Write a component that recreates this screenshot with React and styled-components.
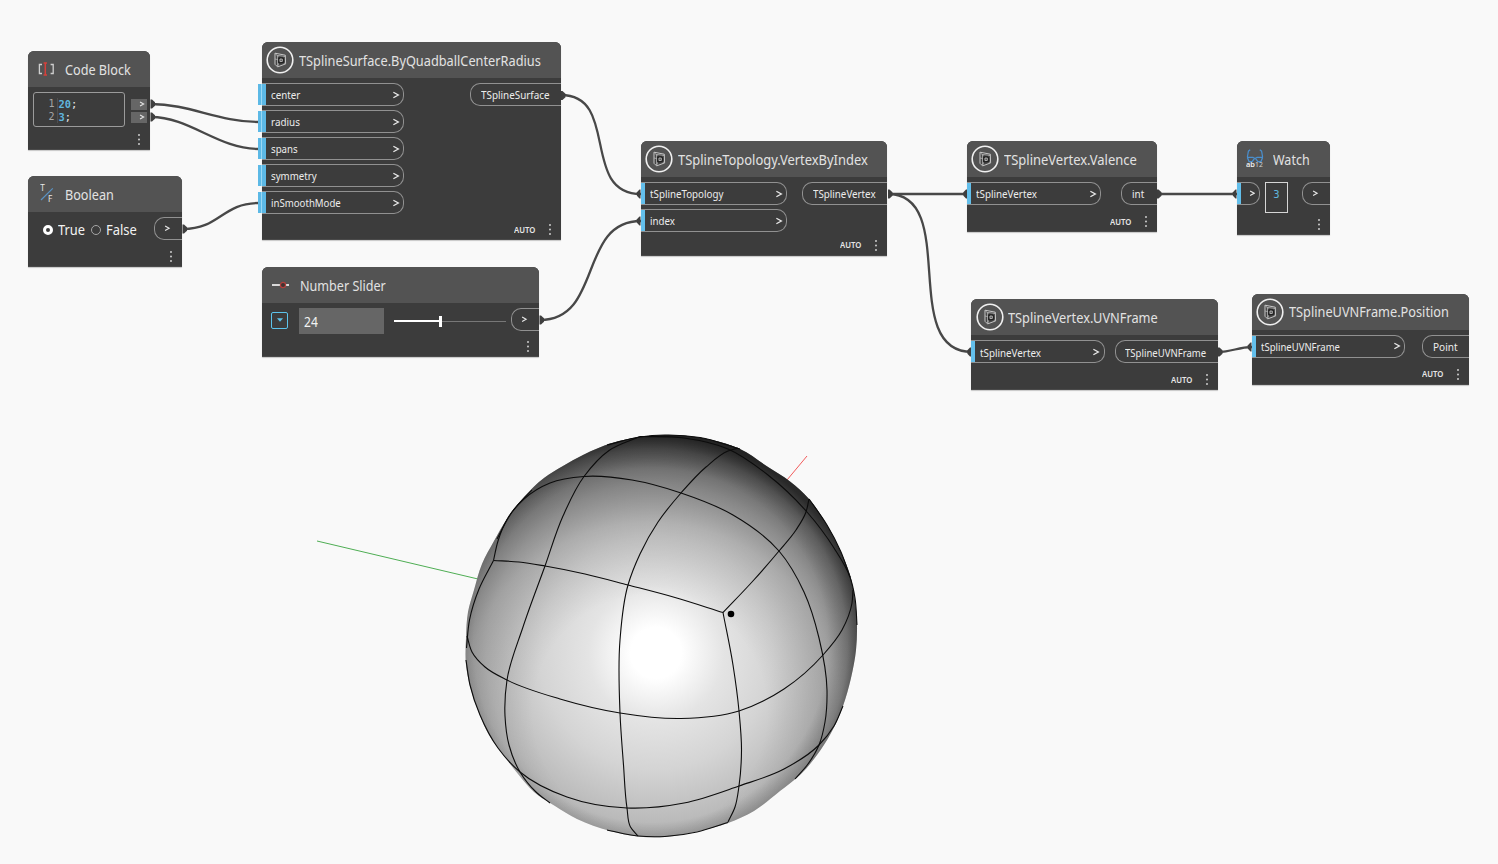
import React, { useLayoutEffect, useRef, useState } from "react";
import styled, { createGlobalStyle, css } from "styled-components";

const GlobalStyle = createGlobalStyle`
  body { margin: 0; background: #f9f9f9; }
  * { box-sizing: border-box; }
`;

const Canvas = styled.main`
  position: relative;
  width: 1498px;
  height: 864px;
  overflow: hidden;
  background: #f9f9f9;
  font-family: "Noto Sans", "Open Sans", sans-serif;
  color: #e4e4e4;
`;

const Scene = styled.svg`
  position: absolute;
  inset: 0;
  display: block;
`;

const NodeCard = styled.section`
  position: absolute;
  left: ${(p) => p.$x}px;
  top: ${(p) => p.$y}px;
  width: ${(p) => p.$w}px;
  height: ${(p) => p.$h}px;
  display: flex;
  flex-direction: column;
  background: #3c3c3c;
  border-radius: 6px 6px 0 0;
  box-shadow: inset 0 -1px 0 #4a4a4a, 0 1px 1px rgba(0, 0, 0, 0.2);
`;

const Header = styled.header`
  height: 36px;
  flex: none;
  display: flex;
  align-items: center;
  padding-left: ${(p) => p.$pad ?? 5}px;
  gap: ${(p) => p.$gap ?? 5}px;
  background: #535353;
  border-radius: 6px 6px 0 0;
`;

const Body = styled.div`
  flex: 1;
  display: flex;
  justify-content: space-between;
  align-items: flex-start;
  padding-top: 5px;
`;

const Footer = styled.footer`
  height: 21px;
  flex: none;
  display: flex;
  align-items: center;
  justify-content: flex-end;
  gap: 13px;
  padding-right: 9px;
`;

const DotsSvg = styled.svg`
  display: block;
`;

const Dots = () => (
  <DotsSvg width="4" height="13" viewBox="0 0 4 13" fill="#c4c4c4">
    <circle cx="2" cy="2" r="1.05" />
    <circle cx="2" cy="6.5" r="1.05" />
    <circle cx="2" cy="11" r="1.05" />
  </DotsSvg>
);

const PortColumn = styled.div`
  display: flex;
  flex-direction: column;
  gap: 4px;
`;

const InPort = styled.div`
  width: ${(p) => p.$w}px;
  height: 23px;
  display: flex;
  align-items: center;
  justify-content: space-between;
  padding: 0 3.5px 0 4px;
  border: 1px solid #919191;
  border-left: 0;
  border-radius: 0 10px 10px 0;

  &::before {
    content: "";
    align-self: stretch;
    flex: none;
    margin: 0 5px 0 ${(p) => (p.$wide ? -8 : -4)}px;
    width: ${(p) => (p.$wide ? 8 : 4)}px;
    background: ${(p) =>
      p.$wide
        ? "linear-gradient(90deg, #5cb9e6 3.5px, #9bd8f5 3.5px, #9bd8f5 4.5px, #5cb9e6 4.5px)"
        : "#63bfeb"};
  }
`;

const PortName = styled.span`
  flex: 1;
  display: flex;
`;

const OutPort = styled.div`
  width: ${(p) => p.$w}px;
  height: 23px;
  display: flex;
  align-items: center;
  padding-left: ${(p) => p.$pad ?? 10}px;
  border: 1px solid #919191;
  border-right: 0;
  border-radius: 10px 0 0 10px;
`;

const TextSlot = styled.span`
  display: flex;
  flex: none;
  padding-top: ${(p) => (p.$kind === "title" ? 2 : p.$kind === "port" ? 0.5 : 1)}px;
`;

const Text = styled.span`
  flex: none;
  white-space: pre;
  line-height: 1;
  transform-origin: 0 50%;
  ${(p) =>
    p.$kind === "title" &&
    css`
      font-size: 14.2px;
      color: #e2e2e2;
    `}
  ${(p) =>
    p.$kind === "port" &&
    css`
      font-size: 11.1px;
      color: #ececec;
    `}
  ${(p) =>
    p.$kind === "auto" &&
    css`
      font-size: 8.5px;
      font-weight: 600;
      color: #e6e6e6;
    `}
  ${(p) =>
    p.$kind === "option" &&
    css`
      font-size: 13.8px;
      color: #f2f2f2;
    `}
`;

// A label condensed so that it fills a given width.
function Label({ kind, width, children }) {
  const ref = useRef(null);
  const [scale, setScale] = useState(1);
  useLayoutEffect(() => {
    setScale(width / ref.current.offsetWidth);
  }, [width]);
  return (
    <TextSlot $kind={kind} style={{ width }}>
      <Text ref={ref} $kind={kind} style={{ transform: `scaleX(${scale})` }}>
        {children}
      </Text>
    </TextSlot>
  );
}

const ChevronSvg = styled.svg`
  flex: none;
  display: block;
`;

const Chevron = ({ size = 8 }) => (
  <ChevronSvg width={size} height={size} viewBox="0 0 7 7" fill="none" stroke="#e8e8e8" strokeWidth="1.2">
    <path d="M1.2 1.1 5.5 3.5 1.2 5.9" />
  </ChevronSvg>
);

const SplineIcon = () => (
  <svg width="28" height="28" viewBox="0 0 28 28" fill="none">
    <circle cx="14" cy="14" r="12.8" stroke="#f0f0f0" strokeWidth="1.6" />
    <g strokeLinejoin="round">
      <path d="M9 7.2 19.3 9.2 19.6 17.9 11.6 20.9 9 18.3Z" fill="#454545" stroke="#c6c6c6" strokeWidth="1" />
      <path d="M11.4 9.2 11.6 20.4M9.2 7.4 12.8 11.4M19.2 9.4 17.3 11.6M19.4 17.8 17.3 16.6M11.6 20.6 12.8 16.8M9 13 12.6 13.8M11.3 9.4 19.2 10.4" stroke="#b5b5b5" strokeWidth="0.8" />
      <path d="M12.8 11.8 17.3 12V16.4L12.8 16.8Z" stroke="#202020" strokeWidth="1.3" />
      <path d="M14 13 16.3 13.1V15.4L14 15.6Z" stroke="#c6c6c6" strokeWidth="0.8" />
    </g>
  </svg>
);

const CodeIcon = () => (
  <svg width="17" height="14" viewBox="0 0 17 14" fill="none">
    <path d="M4 2.5H1.4V11.5H4M12.6 2.5H15.2V11.5H12.6" stroke="#cfcfcf" strokeWidth="1.3" />
    <path d="M7.3 1.5V12.5M5.6 1H9M5.6 13H9" stroke="#d6403b" strokeWidth="1.5" />
  </svg>
);

const IconLetter = styled.text`
  font-family: "Noto Sans", sans-serif;
  font-size: ${(p) => p.$size}px;
  fill: ${(p) => p.$fill};
`;

const BooleanIcon = () => (
  <svg width="14" height="20" viewBox="0 -1 14 20" fill="none">
    <path d="M1 15 12.8 3.4" stroke="#5a93c4" strokeWidth="1.2" />
    <IconLetter $size={8.2} $fill="#e8e8e8" x="0.2" y="6.4">T</IconLetter>
    <IconLetter $size={8.2} $fill="#e8e8e8" x="8" y="16.6">F</IconLetter>
  </svg>
);

const SliderIcon = () => (
  <svg width="17" height="8" viewBox="0 0 17 8" fill="none">
    <path d="M0 4H17" stroke="#f2f2f2" strokeWidth="1.7" />
    <circle cx="11" cy="4" r="2.6" fill="#3e3434" stroke="#b4403d" strokeWidth="1.2" />
  </svg>
);

const WatchIcon = () => (
  <svg width="18" height="20" viewBox="0 0 18 20" fill="none">
    <path
      d="M4.2 .8 2.4 2.2 1.4 8M13.8 .8 15.6 2.2 16.6 8"
      stroke="#4a8fce"
      strokeWidth="1.2"
    />
    <path
      d="M1 8.4H6.9L9 9.6 11.1 8.4H17M1.4 8.6 3 12.6H6.2L8.3 9.6M16.6 8.6 15 12.6H11.8L9.7 9.6"
      stroke="#4a8fce"
      strokeWidth="1.3"
    />
    <IconLetter $size={7.4} $fill="#ececec" x="0" y="18.4" fontWeight="600">ab</IconLetter>
    <IconLetter $size={6.8} $fill="#d4d4d4" x="9" y="18.4">12</IconLetter>
  </svg>
);

function SplineNode({ x, y, w, h, title, titleWidth, inputs, inWidth, output, outWidth, outText, wide }) {
  return (
    <NodeCard $x={x} $y={y} $w={w} $h={h}>
      <Header $pad={4.3} $gap={4.5}>
        <SplineIcon />
        <Label kind="title" width={titleWidth}>{title}</Label>
      </Header>
      <Body>
        <PortColumn>
          {inputs.map(([name, width]) => (
            <InPort key={name} $w={inWidth} $wide={wide}>
              <PortName>
                <Label kind="port" width={width}>{name}</Label>
              </PortName>
              <Chevron />
            </InPort>
          ))}
        </PortColumn>
        <OutPort $w={outWidth} $pad={9.5}>
          <Label kind="port" width={outText}>{output}</Label>
        </OutPort>
      </Body>
      <Footer>
        <Label kind="auto" width={21}>AUTO</Label>
        <Dots />
      </Footer>
    </NodeCard>
  );
}

const CodeEditor = styled.div`
  width: 92px;
  height: 35px;
  margin-left: 4.5px;
  padding: 5px 0 0 14px;
  border: 1px solid #9b9b9b;
  border-radius: 3px;
`;

const CodeLine = styled.div`
  height: 12.5px;
  display: flex;
  align-items: center;
  font-family: "DejaVu Sans Mono", monospace;
  font-size: 10.4px;
  line-height: 12.5px;
  color: #e8e8e8;
`;

const LineNumber = styled.span`
  width: 10px;
  height: 100%;
  padding-left: 1px;
  border-right: 1px solid #4f4f4f;
  color: #a7a7a7;
  font-size: 10px;
`;

const Digits = styled.b`
  margin-left: 1px;
  color: #5fb6de;
`;

const CodePorts = styled.div`
  display: flex;
  flex-direction: column;
  gap: 2px;
  padding: 6.5px 3px 0 0;
`;

const CodePort = styled.div`
  width: 16px;
  height: 11px;
  display: flex;
  align-items: center;
  justify-content: center;
  padding-left: 5px;
  background: #666;
`;

const RadioGroup = styled.div`
  display: flex;
  align-items: center;
  gap: 4.5px;
  height: 24px;
  padding: 1px 0 0 15px;
`;

const Radio = styled.i`
  width: 10px;
  height: 10px;
  border-radius: 50%;
  border: ${(p) => (p.$on ? "3px solid #fff" : "1.4px solid #a6a6a6")};
  margin-left: ${(p) => (p.$on ? 0 : 2)}px;
`;

const SliderRow = styled.div`
  display: flex;
  align-items: center;
  padding-left: 9px;
`;

const DropBox = styled.div`
  width: 17px;
  height: 17px;
  display: grid;
  place-items: center;
  border: 1.5px solid #5cc4ec;
  border-radius: 2px;
  margin: 0 11px 2px 0;
`;

const ValueBox = styled.div`
  width: 85px;
  height: 26px;
  display: flex;
  align-items: center;
  padding-left: 5px;
  background: #666;
  margin-right: 10px;
`;

const Track = styled.div`
  width: 112px;
  height: 11px;
  display: flex;
  align-items: center;
`;

const Filled = styled.i`
  width: 45px;
  height: 2px;
  background: #fff;
`;

const Thumb = styled.i`
  width: 3px;
  height: 11px;
  background: #fff;
`;

const Rest = styled.i`
  flex: 1;
  height: 1px;
  background: #777;
`;

const WatchValue = styled.div`
  width: 23px;
  height: 31px;
  display: grid;
  place-items: start center;
  padding: 6px 0 0 1px;
  border: 1px solid #d6d6d6;
  color: #5fb6de;
  font: 10.5px/10px "DejaVu Sans Mono", monospace;
`;

const WatchInputs = styled.div`
  display: flex;
  align-items: flex-start;
  gap: 5px;
`;

// Smooth curve through a list of points: the tangent at each point is parallel
// to the chord of its neighbours, and each handle is a third of its segment.
function through(points, closed = false) {
  const n = points.length;
  const at = (i) => (closed ? points[(i + n) % n] : points[Math.max(0, Math.min(n - 1, i))]);
  const tangent = (i) => {
    const a = at(i - 1);
    const b = at(i);
    const c = at(i + 1);
    // The nearer neighbour has the greater say in the direction.
    const l0 = Math.hypot(b[0] - a[0], b[1] - a[1]);
    const l1 = Math.hypot(c[0] - b[0], c[1] - b[1]);
    const w0 = l0 ? l1 / l0 : 0;
    const w1 = l1 ? l0 / l1 : 0;
    const edge = !l0 || !l1;
    const vx = edge ? c[0] - a[0] : (b[0] - a[0]) * w0 + (c[0] - b[0]) * w1;
    const vy = edge ? c[1] - a[1] : (b[1] - a[1]) * w0 + (c[1] - b[1]) * w1;
    const len = Math.hypot(vx, vy) || 1;
    return [vx / len, vy / len];
  };
  let d = `M${points[0].join(" ")}`;
  for (let i = 0; i < (closed ? n : n - 1); i++) {
    const b = at(i);
    const c = at(i + 1);
    const h = Math.hypot(c[0] - b[0], c[1] - b[1]) / 3;
    const t0 = tangent(i);
    const t1 = tangent(i + 1);
    d += `C${b[0] + t0[0] * h} ${b[1] + t0[1] * h} ${c[0] - t1[0] * h} ${c[1] - t1[1] * h} ${c[0]} ${c[1]}`;
  }
  return d;
}

const outline = [
  [665, 435], [640, 437], [612, 443], [583, 455], [563, 466], [544, 478], [524, 497], [507, 519],
  [494, 541], [482, 564], [474, 590], [468, 612], [466, 638], [466, 665], [470, 686], [479, 713],
  [489, 735], [504, 756], [518, 774], [534, 792], [555, 806], [577, 819], [610, 831], [638, 836.5],
  [665, 837], [695, 832], [728, 823], [754, 811], [780, 791], [801, 774], [817, 755], [831, 733],
  [843, 706], [851, 678], [856, 650], [857, 625], [855, 600], [850, 575], [840, 550], [827, 525],
  [809, 499], [790, 481.5], [768, 467], [740, 449], [712, 440], [688, 436],
];

const meshLines = [
  [[466.5, 648], [469.5, 620], [479, 589], [493.5, 560.5]],
  [[493.5, 560.5], [498, 541], [507, 519.5], [524, 499], [550, 483], [584, 476.5], [632, 480], [681, 493], [733, 515], [779, 551], [804, 592], [819, 638], [827, 690], [825, 722], [819, 745], [808, 764], [795, 779]],
  [[640, 436.5], [609, 450.5], [584, 476.5], [563, 516], [545, 566], [523, 627], [507, 680], [505, 716], [509, 745], [520, 772], [536, 792], [550, 803]],
  [[738, 448], [728, 451], [706, 467], [681, 493], [658, 522], [640, 554], [628, 585], [620, 640], [620, 713], [623.5, 765], [627, 808], [630.5, 827], [638, 836]],
  [[493.5, 560.5], [519, 562], [545, 566], [585, 574], [628, 585], [675, 597.5], [723, 612.5]],
  [[723, 612.5], [752, 582], [779, 551], [796, 530], [806, 512], [809, 499]],
  [[723, 612.5], [733, 665], [739, 711], [741.5, 750], [739, 786], [735, 807], [728, 822]],
  [[467, 636], [472, 652], [485, 667], [507, 680], [560, 699], [620, 713], [681, 718.5], [739, 711], [784, 689], [823, 655], [842, 630], [852, 603], [853, 590]],
  [[466, 660], [470, 685], [480, 715], [498, 748], [520, 772], [567, 797], [627, 808], [684, 803], [739, 786], [784, 769], [819, 745], [834, 726], [843, 706]],
  [[640, 436.5], [684, 438], [728, 449], [768, 475], [807, 512], [834, 548], [850, 577], [855, 598], [857, 625]],
  [[607, 445], [640, 437], [665, 435], [700, 437.5], [740, 449]],
  [[532, 490], [512, 512], [497, 539]],
  [[607, 830], [638, 836], [665, 836.5], [697, 832], [728, 822.5]],
  [[809, 499], [827, 525], [841, 552], [850, 577]],
];

const wires = [
  "M151 104C190 104 218 122 259 122",
  "M151 117C190 117 218 149 259 149",
  "M183 229C220 229 222 203 259 203",
  "M561 95C620 95 580 194 641 194",
  "M540 320C603 320 578 221 641 221",
  "M888 194H968",
  "M888 194C960 194 898 352 972 352",
  "M1157 194H1237",
  "M1218 352C1232 352 1238 347 1252 347",
];

const outNubs = [[150.5, 104], [150.5, 117], [182.5, 229], [561, 95.5], [539.5, 320], [888, 194], [1157, 194], [1218, 352]];
const inNubs = [[640.5, 194], [640.5, 221], [967, 194], [1236.5, 194], [971, 352], [1251.5, 347]];

function Viewport() {
  const ball = through(outline, true);
  return (
    <Scene width="1498" height="864" viewBox="0 0 1498 864" fill="none">
      <defs>
        <radialGradient id="light" gradientUnits="userSpaceOnUse" cx="656" cy="653" r="212">
          <stop offset="0" stopColor="#ffffff" />
          <stop offset="0.12" stopColor="#ffffff" />
          <stop offset="0.32" stopColor="#e4e4e4" />
          <stop offset="0.55" stopColor="#d4d4d4" />
          <stop offset="0.8" stopColor="#bababa" />
          <stop offset="1" stopColor="#949494" />
        </radialGradient>
        <radialGradient id="shade" gradientUnits="userSpaceOnUse" cx="650" cy="712" r="292">
          <stop offset="0.4" stopColor="#000" stopOpacity="0" />
          <stop offset="0.65" stopColor="#000" stopOpacity="0.14" />
          <stop offset="0.83" stopColor="#000" stopOpacity="0.34" />
          <stop offset="1" stopColor="#000" stopOpacity="0.68" />
        </radialGradient>
        <radialGradient id="rim" gradientUnits="userSpaceOnUse" cx="651" cy="645" r="211">
          <stop offset="0.84" stopColor="#000" stopOpacity="0" />
          <stop offset="0.93" stopColor="#000" stopOpacity="0.15" />
          <stop offset="1" stopColor="#000" stopOpacity="0.45" />
        </radialGradient>
      </defs>
      <path d="M317 541 478 579" stroke="#4fae54" />
      <path d="M787 480 807 456" stroke="#f25b5b" />
      <path d={ball} fill="url(#light)" />
      <path d={ball} fill="url(#shade)" />
      <path d={ball} fill="url(#rim)" />
      <g stroke="#0c0c0c" strokeWidth="1.1">
        {meshLines.map((points, i) => (
          <path key={i} d={through(points)} />
        ))}
      </g>
      <circle cx="731" cy="614" r="3.3" fill="#000" />
      <g stroke="#484848" strokeWidth="2.3">
        {wires.map((d) => (
          <path key={d} d={d} />
        ))}
      </g>
      <g fill="#3f3f3f">
        {outNubs.map(([x, y]) => (
          <path key={`${x}-${y}`} d={`M${x} ${y - 4.5}h1.5l3 2.8v3.4l-3 2.8h-1.5z`} />
        ))}
        {inNubs.map(([x, y]) => (
          <path key={`${x}-${y}`} d={`M${x} ${y - 4.5}h-1l-2.6 2.8v3.4l2.6 2.8h1z`} />
        ))}
      </g>
    </Scene>
  );
}

export default function App() {
  return (
    <Canvas>
      <GlobalStyle />
      <Viewport />

      <NodeCard $x={28} $y={51} $w={122.4} $h={99}>
        <Header $pad={9.5} $gap={10}>
          <CodeIcon />
          <Label kind="title" width={66}>Code Block</Label>
        </Header>
        <Body>
          <CodeEditor>
            <CodeLine><LineNumber>1</LineNumber><Digits>20</Digits>;</CodeLine>
            <CodeLine><LineNumber>2</LineNumber><Digits>3</Digits>;</CodeLine>
          </CodeEditor>
          <CodePorts>
            <CodePort><Chevron size={6} /></CodePort>
            <CodePort><Chevron size={6} /></CodePort>
          </CodePorts>
        </Body>
        <Footer><Dots /></Footer>
      </NodeCard>

      <NodeCard $x={28} $y={176} $w={154.4} $h={91}>
        <Header $pad={12} $gap={11}>
          <BooleanIcon />
          <Label kind="title" width={49}>Boolean</Label>
        </Header>
        <Body>
          <RadioGroup>
            <Radio $on />
            <Label kind="option" width={27}>True</Label>
            <Radio />
            <Label kind="option" width={31}>False</Label>
          </RadioGroup>
          <OutPort $w={28.5} $pad={9.5}><Chevron size={6.5} /></OutPort>
        </Body>
        <Footer><Dots /></Footer>
      </NodeCard>

      <SplineNode
        x={262} y={42} w={299} h={198.4} wide
        title="TSplineSurface.ByQuadballCenterRadius" titleWidth={242}
        inputs={[["center", 29], ["radius", 28.5], ["spans", 27], ["symmetry", 45.5], ["inSmoothMode", 69.5]]}
        inWidth={142} output="TSplineSurface" outWidth={91} outText={68.5}
      />

      <NodeCard $x={262} $y={267} $w={277.4} $h={90.4}>
        <Header $pad={10} $gap={10.5}>
          <SliderIcon />
          <Label kind="title" width={86}>Number Slider</Label>
        </Header>
        <Body>
          <SliderRow>
            <DropBox>
              <svg width="6" height="4" viewBox="0 0 6 4"><path d="M0 .3H6L3 3.7Z" fill="#5cc4ec" /></svg>
            </DropBox>
            <ValueBox><Label kind="option" width={14}>24</Label></ValueBox>
            <Track><Filled /><Thumb /><Rest /></Track>
          </SliderRow>
          <OutPort $w={28.5} $pad={9.5}><Chevron size={6.5} /></OutPort>
        </Body>
        <Footer><Dots /></Footer>
      </NodeCard>

      <SplineNode
        x={641} y={141} w={246.4} h={114.6}
        title="TSplineTopology.VertexByIndex" titleWidth={189.5}
        inputs={[["tSplineTopology", 73], ["index", 24.5]]}
        inWidth={146} output="TSplineVertex" outWidth={85} outText={62.5}
      />
      <SplineNode
        x={967} y={141} w={190} h={91}
        title="TSplineVertex.Valence" titleWidth={132.5}
        inputs={[["tSplineVertex", 61]]}
        inWidth={134} output="int" outWidth={36} outText={12.5}
      />

      <NodeCard $x={1237} $y={141} $w={93.4} $h={94.4}>
        <Header $pad={9} $gap={9}>
          <WatchIcon />
          <Label kind="title" width={37}>Watch</Label>
        </Header>
        <Body>
          <WatchInputs>
            <InPort $w={22.5}><Chevron size={6.5} /></InPort>
            <WatchValue>3</WatchValue>
          </WatchInputs>
          <OutPort $w={28.5} $pad={9.5}><Chevron size={6.5} /></OutPort>
        </Body>
        <Footer><Dots /></Footer>
      </NodeCard>

      <SplineNode
        x={971.4} y={299.4} w={246.8} h={91}
        title="TSplineVertex.UVNFrame" titleWidth={149.5}
        inputs={[["tSplineVertex", 61]]}
        inWidth={133.5} output="TSplineUVNFrame" outWidth={103.5} outText={81}
      />
      <SplineNode
        x={1252} y={293.5} w={217} h={91}
        title="TSplineUVNFrame.Position" titleWidth={160}
        inputs={[["tSplineUVNFrame", 79]]}
        inWidth={153} output="Point" outWidth={47} outText={24.5}
      />
    </Canvas>
  );
}
